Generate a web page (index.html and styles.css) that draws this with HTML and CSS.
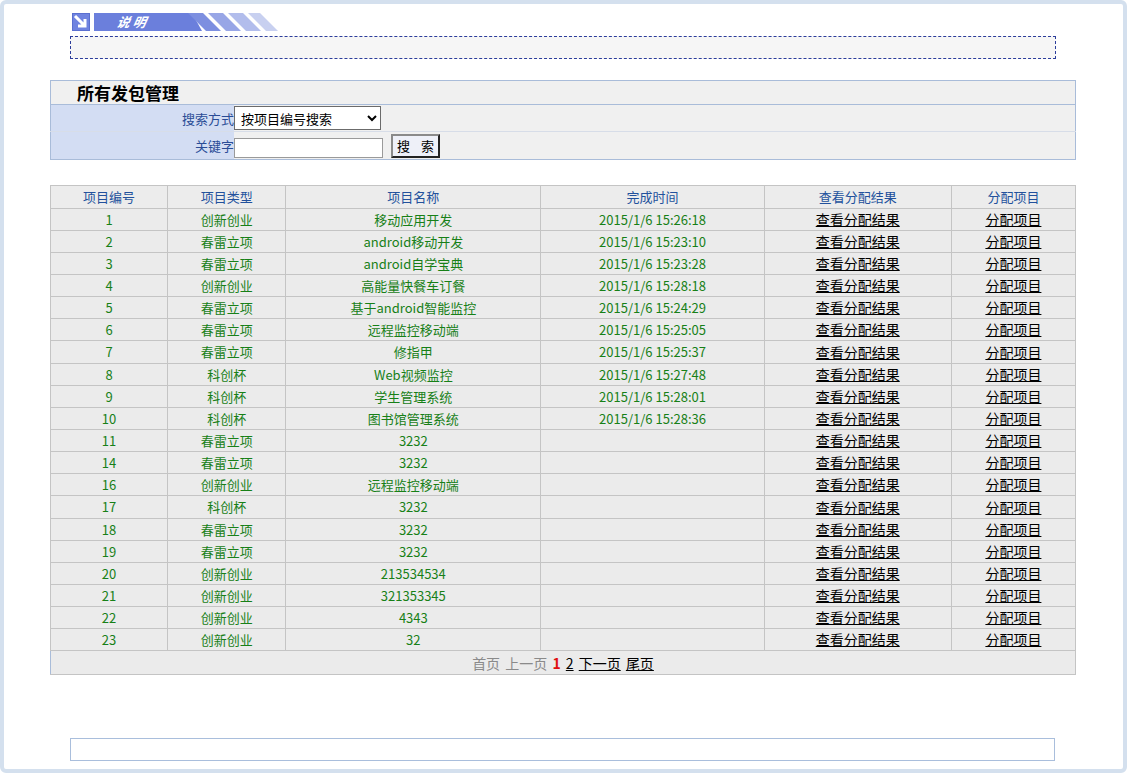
FILE: index.html
```html
<!DOCTYPE html>
<html lang="zh-CN">
<head>
<meta charset="utf-8">
<title>所有发包管理</title>
<link rel="stylesheet" href="styles.css">
</head>
<body>
<div class="frame">
  <div class="banner">
    <svg width="206" height="18" viewBox="0 0 206 18">
      <rect x="0" y="0" width="18" height="18" fill="#5a6fd0"/>
      <rect x="1" y="1" width="16" height="16" fill="#6f83e0"/>
      <path d="M3 3 L13 13 M13 6 L13 13 L6 13" stroke="#fff" stroke-width="3" fill="none"/>
      <path d="M22 0 L120 0 L130 18 L22 18 Z" fill="#6b7fdc"/>
      <text x="44" y="14" font-family="Noto Sans CJK SC, sans-serif" font-size="13" font-style="italic" font-weight="bold" fill="#fff" transform="skewX(-12) translate(3 0)">说 明</text>
      <path d="M116 0 L131 0 L149 18 L134 18 Z" fill="#7d8fe0"/>
      <path d="M136 0 L151 0 L169 18 L154 18 Z" fill="#98a6e6"/>
      <path d="M156 0 L171 0 L189 18 L174 18 Z" fill="#b2bdec"/>
      <path d="M176 0 L188 0 L206 18 L194 18 Z" fill="#c8d0f0"/>
    </svg>
  </div>
  <div class="note"></div>

  <table class="search">
    <tr class="search-title"><td colspan="2">所有发包管理</td></tr>
    <tr class="search-row">
      <td class="label">搜索方式</td>
      <td class="field">
        <select class="select"><option>按项目编号搜索</option></select>
      </td>
    </tr>
    <tr class="search-row">
      <td class="label">关键字</td>
      <td class="field">
        <input class="text" type="text"><button class="btn">搜 索</button>
      </td>
    </tr>
  </table>

  <table class="grid">
    <colgroup>
      <col class="c1"><col class="c2"><col class="c3"><col class="c4"><col class="c5"><col class="c6">
    </colgroup>
    <thead>
      <tr><th>项目编号</th><th>项目类型</th><th>项目名称</th><th>完成时间</th><th>查看分配结果</th><th>分配项目</th></tr>
    </thead>
    <tbody>
      <tr><td>1</td><td>创新创业</td><td>移动应用开发</td><td>2015/1/6 15:26:18</td><td><a href="#">查看分配结果</a></td><td><a href="#">分配项目</a></td></tr>
      <tr><td>2</td><td>春雷立项</td><td>android移动开发</td><td>2015/1/6 15:23:10</td><td><a href="#">查看分配结果</a></td><td><a href="#">分配项目</a></td></tr>
      <tr><td>3</td><td>春雷立项</td><td>android自学宝典</td><td>2015/1/6 15:23:28</td><td><a href="#">查看分配结果</a></td><td><a href="#">分配项目</a></td></tr>
      <tr><td>4</td><td>创新创业</td><td>高能量快餐车订餐</td><td>2015/1/6 15:28:18</td><td><a href="#">查看分配结果</a></td><td><a href="#">分配项目</a></td></tr>
      <tr><td>5</td><td>春雷立项</td><td>基于android智能监控</td><td>2015/1/6 15:24:29</td><td><a href="#">查看分配结果</a></td><td><a href="#">分配项目</a></td></tr>
      <tr><td>6</td><td>春雷立项</td><td>远程监控移动端</td><td>2015/1/6 15:25:05</td><td><a href="#">查看分配结果</a></td><td><a href="#">分配项目</a></td></tr>
      <tr><td>7</td><td>春雷立项</td><td>修指甲</td><td>2015/1/6 15:25:37</td><td><a href="#">查看分配结果</a></td><td><a href="#">分配项目</a></td></tr>
      <tr><td>8</td><td>科创杯</td><td>Web视频监控</td><td>2015/1/6 15:27:48</td><td><a href="#">查看分配结果</a></td><td><a href="#">分配项目</a></td></tr>
      <tr><td>9</td><td>科创杯</td><td>学生管理系统</td><td>2015/1/6 15:28:01</td><td><a href="#">查看分配结果</a></td><td><a href="#">分配项目</a></td></tr>
      <tr><td>10</td><td>科创杯</td><td>图书馆管理系统</td><td>2015/1/6 15:28:36</td><td><a href="#">查看分配结果</a></td><td><a href="#">分配项目</a></td></tr>
      <tr><td>11</td><td>春雷立项</td><td>3232</td><td></td><td><a href="#">查看分配结果</a></td><td><a href="#">分配项目</a></td></tr>
      <tr><td>14</td><td>春雷立项</td><td>3232</td><td></td><td><a href="#">查看分配结果</a></td><td><a href="#">分配项目</a></td></tr>
      <tr><td>16</td><td>创新创业</td><td>远程监控移动端</td><td></td><td><a href="#">查看分配结果</a></td><td><a href="#">分配项目</a></td></tr>
      <tr><td>17</td><td>科创杯</td><td>3232</td><td></td><td><a href="#">查看分配结果</a></td><td><a href="#">分配项目</a></td></tr>
      <tr><td>18</td><td>春雷立项</td><td>3232</td><td></td><td><a href="#">查看分配结果</a></td><td><a href="#">分配项目</a></td></tr>
      <tr><td>19</td><td>春雷立项</td><td>3232</td><td></td><td><a href="#">查看分配结果</a></td><td><a href="#">分配项目</a></td></tr>
      <tr><td>20</td><td>创新创业</td><td>213534534</td><td></td><td><a href="#">查看分配结果</a></td><td><a href="#">分配项目</a></td></tr>
      <tr><td>21</td><td>创新创业</td><td>321353345</td><td></td><td><a href="#">查看分配结果</a></td><td><a href="#">分配项目</a></td></tr>
      <tr><td>22</td><td>创新创业</td><td>4343</td><td></td><td><a href="#">查看分配结果</a></td><td><a href="#">分配项目</a></td></tr>
      <tr><td>23</td><td>创新创业</td><td>32</td><td></td><td><a href="#">查看分配结果</a></td><td><a href="#">分配项目</a></td></tr>
    </tbody>
    <tfoot>
      <tr><td colspan="6" class="pager">
        <span class="off">首页</span>
        <span class="off">上一页</span>
        <span class="cur">1</span>
        <a href="#">2</a>
        <a href="#">下一页</a>
        <a href="#">尾页</a>
      </td></tr>
    </tfoot>
  </table>

  <div class="bottom"></div>
</div>
</body>
</html>
```

FILE: styles.css
```css
html, body {
  margin: 0;
  padding: 0;
  background: #ffffff;
}
body {
  font-family: "Noto Sans CJK SC", "Liberation Sans", sans-serif;
  font-size: 13px;
}
.frame {
  box-sizing: border-box;
  width: 1127px;
  height: 773px;
  border: 4px solid #d4e0ee;
  border-radius: 6px;
  padding-top: 9px;
  display: flex;
  flex-direction: column;
  background: #fff;
}
.banner {
  margin-left: 68px;
  height: 18px;
  line-height: 0;
}
.note {
  box-sizing: border-box;
  margin: 5px 0 0 66px;
  width: 986px;
  height: 23px;
  border: 1px dashed #2c3d9b;
  background: #f6f6f6;
}

/* search panel */
.search {
  margin: 21px 0 0 46px;
  width: 1026px;
  border-collapse: collapse;
  border: 1px solid #a9bcd9;
  box-sizing: border-box;
}
.search td {
  padding: 0;
}
.search-title td {
  height: 23px;
  background: #f0f0f0;
  font-size: 17px;
  font-weight: bold;
  color: #000;
  padding-left: 26px;
  border-bottom: 1px solid #a9bcd9;
  line-height: 22px;
}
.search-row td {
  height: 26px;
  border-top: 1px solid #d7dde8;
}
.search-row + .search-row td {
  height: 27px;
}
.search-row .label {
  width: 183px;
  background: #d3ddf3;
  color: #2a4c96;
  text-align: right;
}
.search-row .field {
  background: #f0f0f0;
}
.select {
  width: 147px;
  height: 24px;
  font-family: "Noto Sans CJK SC", sans-serif;
  font-size: 13px;
  border: 1px solid #6b6b6b;
  background: #fff;
  padding: 0 2px;
  vertical-align: middle;
}
.text {
  box-sizing: border-box;
  width: 149px;
  height: 20px;
  margin-top: 5px;
  border: 1px solid #9a9a9a;
  vertical-align: middle;
  padding: 0;
}
.btn {
  box-sizing: border-box;
  width: 49px;
  height: 24px;
  margin-left: 8px;
  padding: 0;
  font-family: "Noto Sans CJK SC", sans-serif;
  font-size: 13px;
  color: #000;
  background: #eef0f8;
  border: 2px solid #333;
  border-color: #8a8a8a #222 #222 #8a8a8a;
  vertical-align: middle;
  letter-spacing: 4px;
  text-indent: 4px;
}

/* main grid */
.grid {
  margin: 25px 0 0 46px;
  width: 1026px;
  border-collapse: collapse;
  border: 1px solid #a9bcd9;
  background: #ebebeb;
}
.c1 { width: 117px; }
.c2 { width: 118px; }
.c3 { width: 255px; }
.c4 { width: 223px; }
.c5 { width: 187px; }
.c6 { width: 124px; }
.grid th,
.grid td {
  height: 21px;
  padding: 0;
  text-align: center;
  border: 1px solid #c4c4c4;
  line-height: 20px;
  font-weight: normal;
}
.grid th {
  height: 22px;
  color: #22519c;
  background: #ececec;
}
.grid tbody td {
  color: #178017;
}
.grid tbody tr:nth-child(7n) td {
  height: 22px;
}
.grid a {
  color: #000;
  font-size: 14px;
  text-decoration: underline;
}
.grid .pager {
  height: 23px;
  font-size: 14px;
  color: #000;
  border-left: 1px solid #a9bcd9;
  word-spacing: 2px;
}
.pager .off {
  color: #8a8a8a;
}
.pager .cur {
  color: #e01010;
  font-weight: bold;
}

.bottom {
  box-sizing: border-box;
  margin: auto 0 8px 66px;
  width: 985px;
  height: 23px;
  border: 1px solid #a9bedc;
}
```
